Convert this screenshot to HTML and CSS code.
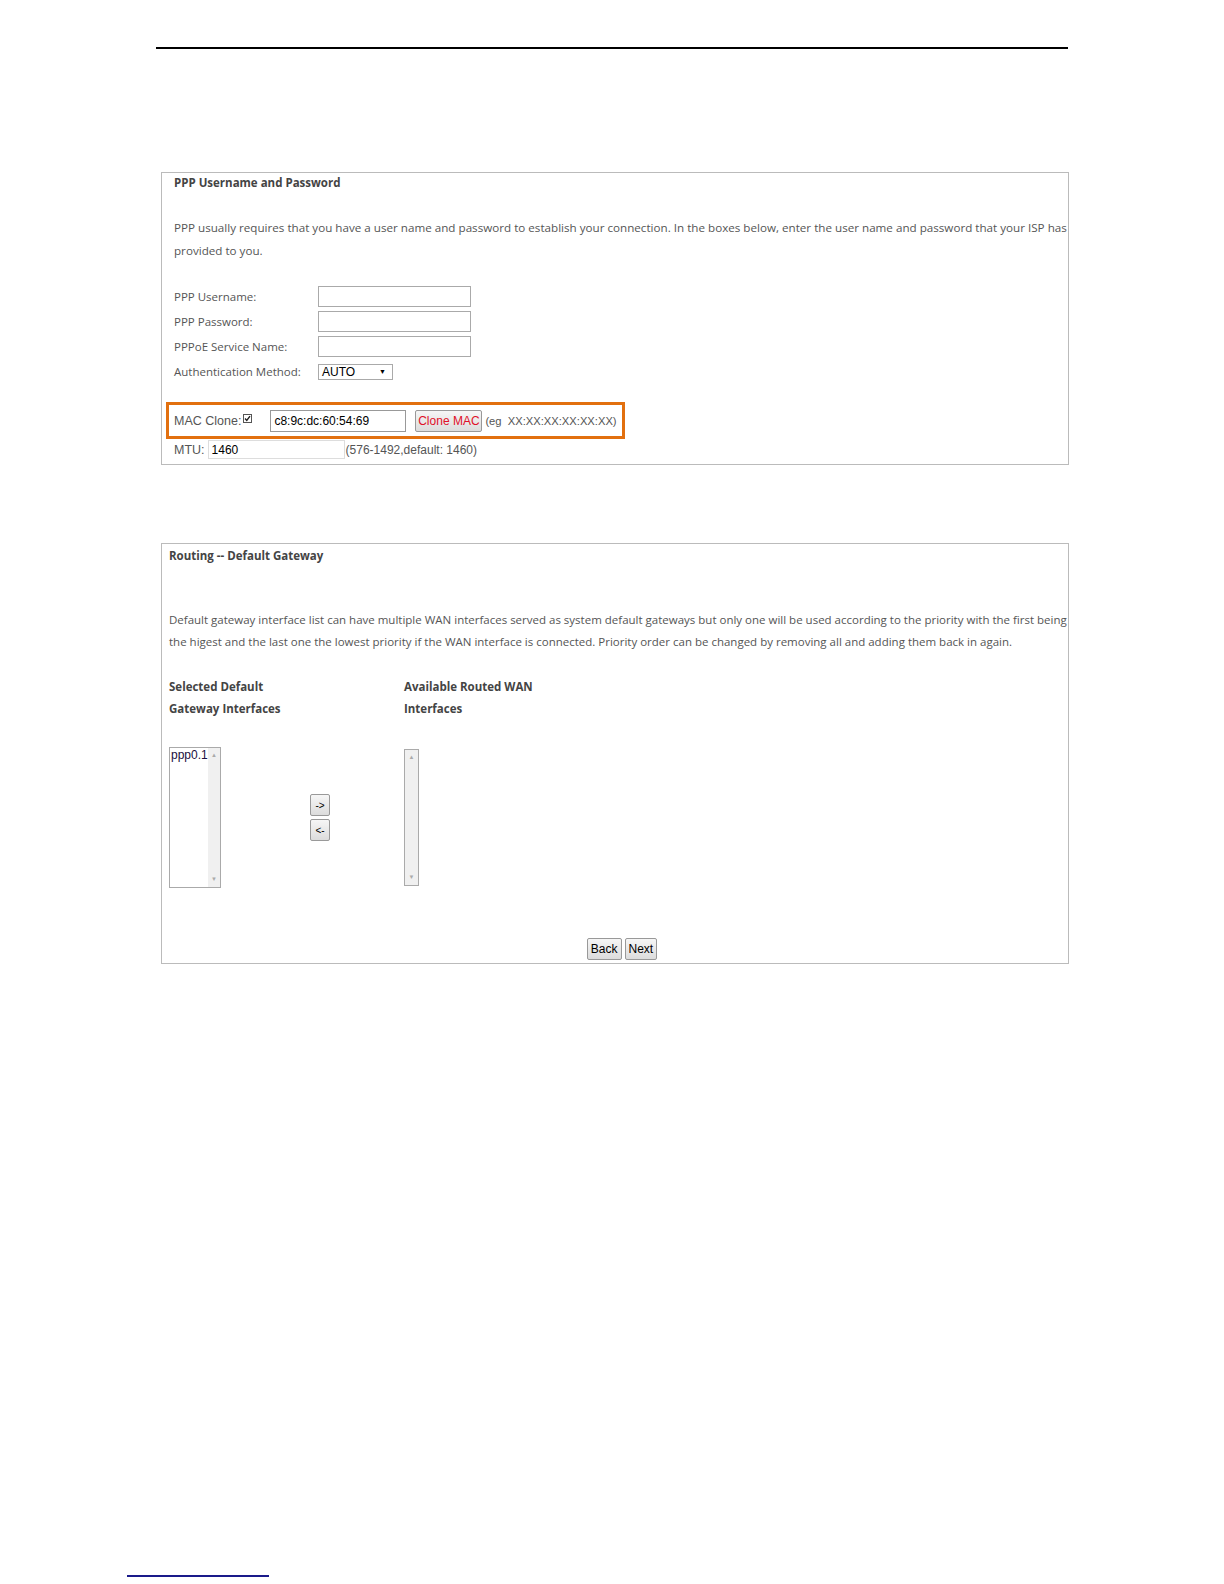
FILE: index.html
```html
<!DOCTYPE html>
<html lang="en">
<head>
    <meta charset="UTF-8">
    <title>PPP and Routing Settings</title>
    <link rel="stylesheet" href="styles.css">
</head>
<body>
    <div class="page">
        <div class="header-rule"></div>

        <!-- PPP account panel -->
        <div class="panel panel-ppp">
            <div class="panel-title">PPP Username and Password</div>
            <p class="panel-text ppp-text">PPP usually requires that you have a user name and password to establish your connection. In the boxes below, enter the user name and password that your ISP has<br>provided to you.</p>

            <div class="form-grid">
                <label>PPP Username:</label>
                <input type="text" class="field">
                <label>PPP Password:</label>
                <input type="password" class="field">
                <label>PPPoE Service Name:</label>
                <input type="text" class="field">
                <label>Authentication Method:</label>
                <div class="select-box"><span>AUTO</span><span class="caret">&#9660;</span></div>
            </div>

            <div class="mac-row">
                <span class="plain-label">MAC Clone:</span>
                <span class="check">
                    <svg width="9" height="9" viewBox="0 0 9 9"><rect x="0.5" y="0.5" width="8" height="8" fill="#fff" stroke="#555"/><path d="M2 4.5 L3.8 6.5 L7 2.2" fill="none" stroke="#222" stroke-width="1.4"/></svg>
                </span>
                <input type="text" class="mac-field" value="c8:9c:dc:60:54:69">
                <button class="btn btn-clone">Clone MAC</button>
                <span class="hint">(eg&nbsp;&nbsp;XX:XX:XX:XX:XX:XX)</span>
            </div>

            <div class="mtu-row">
                <span class="plain-label">MTU:</span>
                <input type="text" class="mtu-field" value="1460">
                <span class="hint">(576-1492,default: 1460)</span>
            </div>
        </div>

        <!-- Default gateway panel -->
        <div class="panel panel-route">
            <div class="panel-title">Routing -- Default Gateway</div>
            <p class="panel-text route-text">Default gateway interface list can have multiple WAN interfaces served as system default gateways but only one will be used according to the priority with the first being<br>the higest and the last one the lowest priority if the WAN interface is connected. Priority order can be changed by removing all and adding them back in again.</p>

            <div class="iface-grid">
                <div class="col-head">Selected Default<br>Gateway Interfaces</div>
                <div></div>
                <div class="col-head">Available Routed WAN<br>Interfaces</div>

                <div class="listbox listbox-selected">
                    <div class="list-items">ppp0.1</div>
                    <div class="scroll-track"><span>&#9650;</span><span>&#9660;</span></div>
                </div>
                <div class="move-btns">
                    <button class="btn btn-small">-&gt;</button>
                    <button class="btn btn-small">&lt;-</button>
                </div>
                <div class="listbox listbox-avail">
                    <div class="scroll-track"><span>&#9650;</span><span>&#9660;</span></div>
                </div>
            </div>

            <div class="actions">
                <button class="btn btn-nav">Back</button>
                <button class="btn btn-nav">Next</button>
            </div>
        </div>

        <div class="footer-rule"></div>
    </div>
</body>
</html>
```

FILE: styles.css
```css
body {
    margin: 0;
    background-color: #fff;
    font-family: "Open Sans", "Noto Sans", sans-serif;
    color: #555;
}

.page {
    margin-left: 156px;
    width: 912px;
    padding-top: 47px;
}

.header-rule {
    height: 2px;
    background-color: #000;
}

.panel {
    box-sizing: border-box;
    width: 908px;
    margin-left: 5px;
    border: 1px solid #bbb;
}

.panel-ppp {
    margin-top: 123px;
    height: 293px;
    padding: 0 0 0 12px;
}

.panel-route {
    margin-top: 78px;
    height: 421px;
    padding: 2px 0 0 7px;
}

.panel-title {
    font-size: 11.5px;
    font-weight: bold;
    color: #444;
    line-height: 20px;
}

.panel-text {
    margin: 24px 0 0;
    font-size: 11.5px;
    line-height: 22.5px;
    white-space: nowrap;
}

.ppp-text {
    font-size: 11.65px;
}

.route-text {
    margin-top: 43px;
    line-height: 21.5px;
}

/* form rows */
.form-grid {
    display: grid;
    grid-template-columns: 144px auto;
    grid-auto-rows: 25px;
    align-items: center;
    justify-items: start;
    margin-top: 22px;
    font-size: 11.5px;
}

.field {
    box-sizing: border-box;
    width: 153px;
    height: 21px;
    margin: 0;
    border: 1px solid #aaa;
    padding: 0 3px;
}

.select-box {
    box-sizing: border-box;
    width: 75px;
    height: 16px;
    border: 1px solid #aaa;
    display: flex;
    justify-content: space-between;
    align-items: center;
    padding: 0 6px 0 3px;
    font-family: "Liberation Sans", Arial, sans-serif;
    font-size: 12px;
    color: #000;
}

.caret {
    font-size: 7px;
}

.plain-label {
    font-family: "Liberation Sans", Arial, sans-serif;
    font-size: 12.5px;
    color: #555;
    white-space: nowrap;
    flex-shrink: 0;
}

.mac-row {
    box-sizing: border-box;
    display: flex;
    align-items: center;
    width: 459px;
    height: 37px;
    margin: 18px 0 0 -8px;
    padding-left: 5px;
    border: 3px solid #e2700f;
}

.check {
    display: flex;
    flex-shrink: 0;
    margin: 0 0 5px 2px;
}

.mac-field {
    box-sizing: border-box;
    flex-shrink: 0;
    width: 136px;
    height: 22px;
    margin: 0 0 0 18px;
    border: 1px solid #999;
    padding: 0 3px;
    font-family: "Liberation Sans", Arial, sans-serif;
    font-size: 12px;
    color: #000;
}

.hint {
    font-family: "Liberation Sans", Arial, sans-serif;
    font-size: 12px;
    color: #555;
    white-space: nowrap;
}

.mac-row .hint {
    margin-left: 3px;
    font-size: 11.2px;
}

.mtu-row {
    display: flex;
    align-items: center;
    height: 21px;
}

.mtu-field {
    box-sizing: border-box;
    flex-shrink: 0;
    width: 137px;
    height: 19px;
    margin: 0 1px 0 3px;
    border: 1px solid #ddd;
    padding: 0 3px;
    font-family: "Liberation Sans", Arial, sans-serif;
    font-size: 12px;
    color: #000;
}

.btn {
    box-sizing: border-box;
    flex-shrink: 0;
    margin: 0;
    padding: 0;
    border: 1px solid #999;
    border-radius: 2px;
    background: linear-gradient(#f6f6f6, #dcdcdc);
    font-family: "Liberation Sans", Arial, sans-serif;
    font-size: 12px;
    color: #000;
    white-space: nowrap;
}

.btn-clone {
    width: 67px;
    height: 22px;
    margin-left: 9px;
    color: #e01028;
}

/* gateway interface lists */
.iface-grid {
    display: grid;
    grid-template-columns: 141px 94px auto;
    align-items: center;
    margin-top: 24px;
}

.col-head {
    font-size: 11.5px;
    font-weight: bold;
    color: #444;
    line-height: 22px;
    white-space: nowrap;
    align-self: start;
}

.listbox {
    box-sizing: border-box;
    display: flex;
    margin-top: 27px;
    border: 1px solid #aaa;
    background-color: #fff;
}

.listbox-selected {
    width: 52px;
    height: 141px;
}

.listbox-avail {
    width: 15px;
    height: 137px;
    margin-top: 29px;
    align-self: start;
}

.list-items {
    flex: 1;
    padding: 0 0 0 1px;
    font-family: "Liberation Sans", Arial, sans-serif;
    font-size: 12px;
    color: #1a1040;
}

.scroll-track {
    width: 14px;
    background-color: #f0f0f0;
    display: flex;
    flex-direction: column;
    justify-content: space-between;
    align-items: center;
    padding: 3px 0 4px;
    font-size: 6px;
    color: #aaa;
}

.listbox-avail .scroll-track {
    width: 13px;
}

.move-btns {
    display: flex;
    flex-direction: column;
    gap: 3px;
    margin-top: 27px;
}

.btn-small {
    width: 20px;
    height: 22px;
    font-size: 10px;
}

.actions {
    display: flex;
    justify-content: center;
    gap: 3px;
    margin-top: 50px;
    padding-left: 7px;
}

.btn-nav {
    height: 22px;
    padding: 0 3px;
    font-size: 12px;
}

.footer-rule {
    width: 142px;
    height: 2px;
    margin: 611px 0 0 -29px;
    background-color: #1a1a8a;
}
```
